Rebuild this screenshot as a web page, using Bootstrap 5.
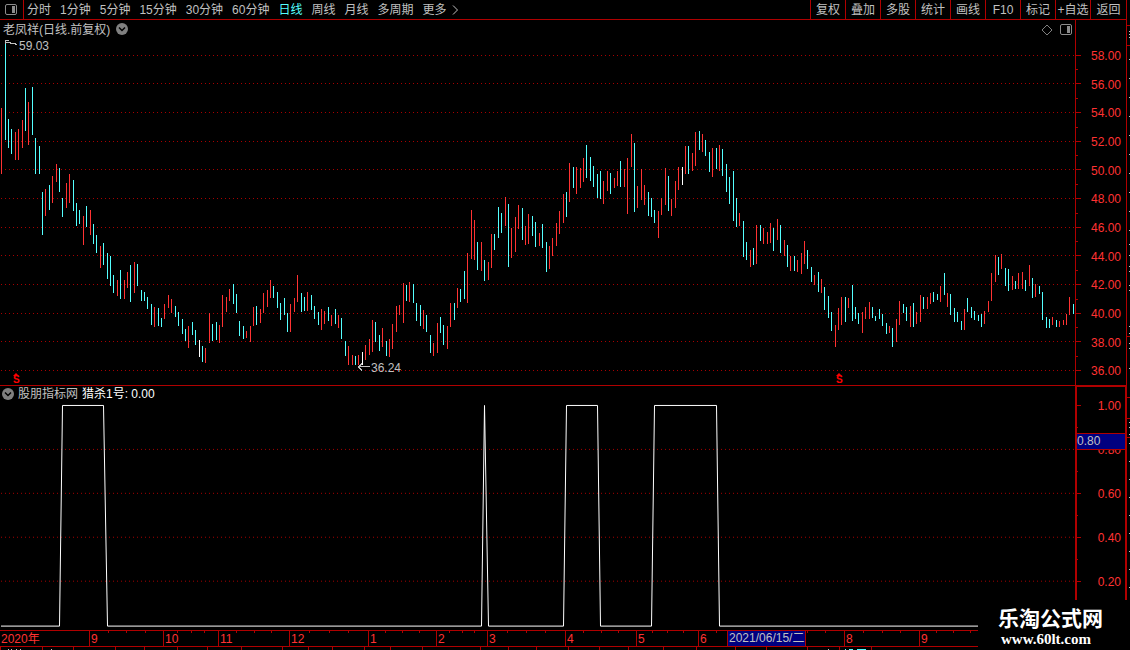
<!DOCTYPE html>
<html lang="zh-CN">
<head>
<meta charset="utf-8">
<meta name="viewport" content="width=device-width, initial-scale=1">
<title>老凤祥 日线</title>
<link href="https://cdn.jsdelivr.net/npm/bootstrap@5.3.0/dist/css/bootstrap.min.css" rel="stylesheet">
<style>
  :root { --line: #b00000; --up: #ff3232; --down: #54ffff; --txt: #c0c0c0; --navy: #000080; }
  body { background: #000; color: var(--txt); font: 12px/12px "Liberation Sans", "Noto Sans CJK SC", sans-serif; }
  .screen { height: 100vh; }
  .toolbar { height: 20px; border-bottom: 1px solid var(--line); }
  .tool { background: none; border: 0; padding: 0; color: inherit; line-height: 18px; white-space: nowrap; }
  .tool.current { color: var(--down); }
  .layout-btn { width: 24px; border-right: 1px solid var(--line); }
  .periods { gap: 9px; padding-left: 3px; }
  .actions .tool { width: 35px; border-left: 1px solid var(--line); }
  .actions .tool:last-child { width: 36px; }
  .price-panel { flex: 366 1 0; min-height: 0; border-bottom: 1px solid var(--line); }
  .signal-panel { flex: 244 1 0; min-height: 0; }
  .plot { min-width: 0; }
  .plot-title { top: 3px; left: 3px; height: 14px; }
  .signal-panel .plot-title { top: 1px; left: 2px; }
  .plot-tools { top: 3px; right: 2px; gap: 6px; }
  .scale { width: 51px; border-left: 1px solid var(--line); color: var(--up); }
  .scale-labels { padding: 30px 5px 8px 0; }
  .signal-panel .scale { border: solid var(--line); border-width: 1px 1px 0 2px; }
  .signal-panel .scale-labels { padding: 13px 4px 42px 0; }
  .ticks { width: 6px; }
  .cursor-value { top: 46px; height: 17px; line-height: 15px; background: var(--navy); color: var(--txt); border: solid var(--line); border-width: 1px 0; }
  .time-axis { height: 17px; margin-right: 148px; border: solid var(--line); border-width: 1px 0; color: var(--up); line-height: 16px; }
  .month { flex: none; padding-left: 1px; border-left: 1px solid var(--line); white-space: nowrap; }
  .month:first-child { border-left: 0; }
  .cursor-date { background: var(--navy); color: var(--txt); border: solid var(--line); border-width: 0 1px; padding-left: 1px; line-height: 14px; height: 15px; width: 79px; white-space: nowrap; }
  .status { height: 3px; }
  .edge { width: 4px; border-left: 1px solid var(--line); }
  .note { line-height: 12px; }
  .event { color: #f00; font: bold 10px/8px "Liberation Sans", sans-serif; }
  .site-sign { width: 152px; height: 50px; padding: 6px 0 0 20px; background: #000; color: #fff; }
  .site-name { font: bold 21px/22px "Noto Sans CJK SC", sans-serif; }
  .site-url { font: bold 15px/16px "Liberation Serif", serif; padding: 3px 0 0 3px; }
  svg { display: block; flex: none; }
  .plot > svg, .ticks, .edge svg { shape-rendering: crispEdges; }
</style>
</head>
<body>
<div class="screen d-flex position-relative overflow-hidden">
  <div class="d-flex flex-column flex-grow-1 overflow-hidden">
    <nav class="toolbar d-flex flex-shrink-0" aria-label="周期">
      <button class="tool layout-btn d-flex align-items-center ps-1" aria-label="布局">
        <svg width="14" height="13" viewBox="0 0 14 13"><rect x="1.5" y="1.5" width="11" height="10" rx="1.5" fill="none" stroke="#8c8c8c"/><rect x="8" y="3" width="3" height="7" fill="#8c8c8c"/></svg>
      </button>
      <div class="periods d-flex flex-grow-1">
        <button class="tool">分时</button><button class="tool">1分钟</button><button class="tool">5分钟</button><button class="tool">15分钟</button><button class="tool">30分钟</button><button class="tool">60分钟</button><button class="tool current">日线</button><button class="tool">周线</button><button class="tool">月线</button><button class="tool">多周期</button>
        <button class="tool d-flex align-items-center">更多<svg class="ms-1" width="8" height="10" viewBox="0 0 8 10"><path d="M2 .5 6.500 5 2 9.500" fill="none" stroke="#c0c0c0"/></svg></button>
      </div>
      <div class="actions d-flex">
        <button class="tool">复权</button><button class="tool">叠加</button><button class="tool">多股</button><button class="tool">统计</button><button class="tool">画线</button><button class="tool">F10</button><button class="tool">标记</button><button class="tool">+自选</button><button class="tool">返回</button>
      </div>
    </nav>

    <section class="price-panel d-flex">
      <div class="plot flex-grow-1 position-relative" id="pricePlot">
        <svg id="priceChart" class="w-100 h-100" viewBox="0 20 1075 365" preserveAspectRatio="none" role="img" aria-label="日线"></svg>
        <div class="plot-title position-absolute d-flex align-items-center gap-1">
          <span>老凤祥(日线.前复权)</span>
          <svg width="14" height="14" viewBox="0 0 14 14"><circle cx="8" cy="6" r="6" fill="#808080"/><path d="m5 4.500 3 3 3-3" fill="none" stroke="#000" stroke-width="1.500"/></svg>
        </div>
        <div class="plot-tools position-absolute d-flex align-items-center">
          <svg width="12" height="12" viewBox="0 0 12 12"><path d="M6 1 11 6 6 11 1 6Z" fill="none" stroke="#808080"/></svg>
          <svg width="14" height="13" viewBox="0 0 14 13"><rect x="1.500" y="1.500" width="11" height="10" rx="1.500" fill="none" stroke="#8c8c8c"/><rect x="8" y="3" width="3" height="7" fill="#8c8c8c"/></svg>
        </div>
      </div>
      <div class="scale position-relative flex-shrink-0">
        <svg id="priceTicks" class="ticks h-100 position-absolute start-0 top-0" viewBox="0 20 6 365" preserveAspectRatio="none"></svg>
        <div class="scale-labels h-100 d-flex flex-column justify-content-between text-end">
          <span>58.00</span><span>56.00</span><span>54.00</span><span>52.00</span><span>50.00</span><span>48.00</span><span>46.00</span><span>44.00</span><span>42.00</span><span>40.00</span><span>38.00</span><span>36.00</span>
        </div>
      </div>
    </section>

    <section class="signal-panel d-flex">
      <div class="plot flex-grow-1 position-relative">
        <svg id="signalChart" class="w-100 h-100" viewBox="0 386 1075 244" preserveAspectRatio="none" role="img" aria-label="猎杀1号"></svg>
        <div class="plot-title position-absolute d-flex align-items-center gap-1">
          <svg width="12" height="14" viewBox="0 0 12 14"><circle cx="6" cy="7" r="6" fill="#808080"/><path d="m3 5.500 3 3 3-3" fill="none" stroke="#000" stroke-width="1.500"/></svg>
          <span>股朋指标网</span>
          <span class="text-white">猎杀1号: 0.00</span>
        </div>
      </div>
      <div class="scale position-relative flex-shrink-0">
        <svg id="signalTicks" class="ticks h-100 position-absolute start-0 top-0" viewBox="0 387 6 243" preserveAspectRatio="none"></svg>
        <div class="scale-labels h-100 d-flex flex-column justify-content-between text-end">
          <span>1.00</span><span>0.80</span><span>0.60</span><span>0.40</span><span>0.20</span>
        </div>
        <div class="cursor-value position-absolute start-0 end-0">0.80</div>
      </div>
    </section>

    <div class="time-axis plot d-flex flex-shrink-0 position-relative" id="timeAxis"></div>
    <div class="status plot flex-shrink-0"><svg id="statusStrip" class="w-100 h-100" viewBox="0 647 1126 3" preserveAspectRatio="none"></svg></div>
  </div>
  <div class="edge flex-shrink-0"><svg id="edgeMarks" class="w-100 h-100" viewBox="1127 0 3 650" preserveAspectRatio="none"></svg></div>
  <div class="site-sign position-absolute bottom-0 end-0">
    <div class="site-name">乐淘公式网</div>
    <div class="site-url">www.60lt.com</div>
  </div>
</div>

<script src="https://cdn.jsdelivr.net/npm/bootstrap@5.3.0/dist/js/bootstrap.bundle.min.js"></script>
<script>
// x, high, low, kind (r = up, c = down, w = flat)
const bars = `1 108 174 r,5 40 140 c,8 119 148 c,11 129 154 c,15 132 160 r,18 129 160 r,22 120 148 r,25 88 131 c,28 102 145 r,32 87 135 c,35 138 174 c,39 146 174 c,42 192 235 c,45 189 216 r,49 185 210 c,52 176 203 r,56 164 182 r,59 168 192 c,62 198 217 c,66 183 208 r,69 174 203 r,73 180 211 c,76 203 226 c,79 210 224 c,83 216 245 r,86 206 227 c,90 210 235 r,93 224 244 c,96 235 253 c,100 246 268 r,103 243 265 c,107 253 279 c,110 256 286 c,113 275 293 c,117 280 296 r,120 270 299 c,124 280 299 r,127 272 288 r,130 265 302 c,134 262 293 r,137 264 286 c,141 290 301 c,144 292 301 c,147 297 309 c,151 304 325 c,154 307 327 r,158 308 326 c,161 318 327 c,164 304 319 r,168 295 308 r,171 299 313 r,175 306 317 c,178 312 326 c,182 319 334 c,185 329 341 c,188 326 348 r,192 322 335 c,195 330 345 c,199 340 357 w,202 346 362 c,205 348 363 r,209 313 343 r,212 324 341 c,216 322 340 c,219 325 343 r,222 295 327 r,226 297 312 r,229 289 301 r,233 284 304 c,236 294 313 c,239 321 336 c,243 326 339 c,246 331 338 r,250 326 342 r,253 307 326 r,256 306 325 c,260 309 323 r,263 293 313 r,267 290 307 r,270 280 298 r,273 286 298 c,277 292 308 c,280 303 320 c,284 298 315 c,287 313 332 c,290 304 332 r,294 298 312 r,297 275 302 r,301 293 312 c,304 297 311 c,307 292 311 r,311 295 310 c,314 306 319 c,318 312 325 c,321 309 330 r,324 311 324 r,328 307 321 c,331 315 326 r,335 309 324 c,338 315 328 r,341 318 339 c,345 341 356 c,348 346 365 r,352 355 365 r,355 356 365 c,358 355 365 r,362 352 365 w,365 345 360 r,369 339 355 r,372 320 352 r,375 322 342 c,379 335 351 c,382 328 347 r,386 341 356 c,389 339 357 r,392 324 349 r,396 306 332 r,399 305 315 r,403 283 323 r,406 285 301 c,409 282 302 r,413 284 303 c,416 303 321 c,420 305 326 c,423 310 329 r,426 315 332 c,430 335 353 c,433 343 356 r,437 323 353 r,440 317 333 c,443 325 345 c,447 326 349 r,450 303 327 r,454 303 320 c,457 288 308 r,460 289 302 c,464 271 299 c,467 253 303 r,471 210 259 r,474 220 260 r,477 242 270 c,481 242 271 r,484 260 281 c,488 262 280 r,491 234 268 r,494 234 250 c,498 207 238 c,501 213 233 c,505 197 226 r,508 204 267 c,511 228 258 r,515 217 252 r,518 205 229 r,522 208 240 c,525 226 245 r,528 214 244 r,532 216 236 c,535 222 247 c,539 233 246 r,542 224 248 c,546 242 272 c,549 246 269 r,552 238 256 r,556 223 246 r,559 211 234 r,563 194 223 r,566 192 217 c,569 163 202 r,573 167 188 c,576 167 194 r,580 168 188 r,583 158 182 r,586 145 178 c,590 157 181 c,593 166 187 c,597 174 198 c,600 171 199 c,603 181 204 r,607 171 191 r,610 173 194 c,614 178 188 r,617 171 186 r,620 161 187 c,624 169 187 r,627 158 214 r,631 134 167 r,634 143 212 c,637 186 208 r,641 169 200 r,644 185 205 r,648 192 216 c,651 198 217 c,654 210 223 c,658 211 238 r,661 198 215 r,665 168 205 r,668 176 211 c,671 199 216 r,675 181 208 r,678 167 190 r,682 167 185 w,685 146 174 r,688 146 174 c,692 153 171 r,695 132 166 r,699 131 150 c,702 134 152 r,705 140 156 c,709 152 172 c,712 148 177 r,716 148 169 c,719 145 171 r,722 149 176 c,726 164 192 c,729 177 204 c,733 171 221 c,736 198 227 c,739 213 226 r,743 221 257 c,746 242 260 c,750 250 267 r,753 248 265 c,756 225 264 r,760 225 241 c,763 228 244 r,767 232 244 r,770 223 243 r,773 228 251 c,777 219 240 r,780 225 253 c,784 240 256 r,787 245 267 c,790 256 271 r,794 256 271 c,797 260 272 r,801 253 274 r,804 241 264 r,807 250 269 c,811 267 282 c,814 275 285 r,818 272 292 c,821 279 293 r,824 287 310 c,828 296 318 c,831 312 331 c,835 325 347 r,838 308 330 r,841 297 325 r,845 297 322 c,848 298 308 r,852 285 321 c,855 307 319 c,858 313 324 c,862 312 333 r,865 307 319 r,869 302 319 r,872 307 318 c,875 316 321 c,879 309 319 c,882 314 326 c,886 323 334 c,889 326 333 r,892 328 347 c,896 319 342 r,899 301 325 r,903 304 313 c,906 307 321 c,910 306 327 r,913 303 327 c,916 312 324 r,920 295 322 r,923 297 309 c,927 297 309 r,930 293 304 r,933 292 302 c,937 294 300 c,940 286 302 r,944 273 295 c,947 293 307 r,950 294 315 c,954 308 322 c,957 312 322 c,961 321 330 c,964 309 330 r,967 298 312 c,971 307 318 c,974 311 320 c,978 315 321 c,981 314 327 c,984 311 324 r,988 301 312 r,991 273 301 r,995 255 282 r,998 257 275 c,1001 254 269 r,1005 268 286 c,1008 269 291 c,1012 276 290 r,1015 281 289 c,1018 273 289 r,1022 272 289 r,1025 280 291 c,1029 265 286 r,1032 278 298 c,1035 284 297 r,1039 286 294 c,1042 292 320 c,1046 317 328 c,1049 319 328 c,1052 317 325 r,1056 320 327 c,1059 321 327 r,1063 320 325 r,1066 314 325 r,1069 297 315 r,1073 304 314 c`;
const colours = { r: '#ff3232', c: '#54ffff', w: '#ffffff' };
const el = id => document.getElementById(id);
const rect = (x, y, w, h, fill) => `<rect x="${x}" y="${y}" width="${w}" height="${h}" fill="${fill}"/>`;
const grid = ys => ys.map(y => `<path d="M1 ${y + .5}H1075" stroke="#a80000" stroke-dasharray="1 3"/>`).join('');
const half = ys => ys.slice(1).map((y, i) => Math.round((y + ys[i]) / 2));

const priceRows = [55, 83, 112, 141, 169, 198, 227, 255, 284, 313, 341, 370];
el('priceChart').innerHTML = grid(priceRows) + bars.split(',').map(b => {
  const [x, top, low, kind] = b.split(' ');
  return rect(x, top, 1, low - top, colours[kind]);
}).join('') + '<path d="M9 40.500H5.500V44M6 42.500H9L12 43.500H14L17 44.500M370 366.500H358M362 363 358.500 366.500 362 370" fill="none" stroke="#c0c0c0"/>';
el('priceTicks').innerHTML = priceRows.map(y => rect(0, y, 5, 1, '#b00000')).join('') + half(priceRows).map(y => rect(0, y, 2, 1, '#b00000')).join('');

const signalRows = [405, 449, 493, 537, 581];
el('signalChart').innerHTML = grid(signalRows.slice(1)) +
  '<path d="M1 626.500H59.500L62.500 405.500H103.500L107.500 626.500H481.500L484.500 405.500 488.500 626.500H563.500L566.500 405.500H597.500L600.500 626.500H651.500L654.500 405.500H716.500L719.500 626.500H1075" fill="none" stroke="#fff"/>';
el('signalTicks').innerHTML = signalRows.map(y => rect(0, y, 4, 1, '#b00000')).join('') + half(signalRows).map(y => rect(0, y, 1, 1, '#b00000')).join('');

// Labels pinned to points of the price plot
const pin = (x, y, html) => `<span class="note position-absolute" style="left:${x / 10.75}%;top:${(y - 20) / 3.65}%">${html}</span>`;
const mark = '<span class="event d-flex flex-column align-items-center"><svg width="6" height="3" viewBox="0 0 6 3"><path d="M3 0 6 3H0Z" fill="#f00"/></svg>S</span>';
el('pricePlot').insertAdjacentHTML('beforeend', pin(19, 40, '59.03') + pin(371, 362, '36.24') + pin(13, 373, mark) + pin(836, 373, mark));

// Month cells share the axis in proportion to their trading days
const months = [['2020年', 89], ['9', 74], ['10', 55], ['11', 71], ['12', 79], ['1', 68], ['2', 51], ['3', 78], ['4', 71], ['5', 62], ['6', 146], ['8', 75], ['9', 59]];
const weeks = [108,126,145,177,191,204,236,254,271,309,329,348,385,402,419,449,462,474,507,526,545,583,601,618,652,667,683,716,807,825,863,882,900,936,953,970];
el('timeAxis').innerHTML = months.map(([m, w]) => `<div class="month" style="width:${w / 9.78}%">${m}</div>`).join('') +
  `<svg class="position-absolute start-0 top-0 w-100" height="2" viewBox="0 0 978 2" preserveAspectRatio="none">${weeks.map(x => rect(x, 0, 1, 2, '#b00000')).join('')}</svg>` +
  `<div class="cursor-date position-absolute top-0" style="left:${727 / 9.78}%">2021/06/15/二</div>`;

el('statusStrip').innerHTML = [0,42,73,115,144,177,207,241,282,308,332,364,390,422,480,508,536,568,599,628,663,696,735,766,807,839,871].map(x => rect(x, 647, 1, 3, '#b00000')).join('') +
  [8,11,16,20,51,828].map(x => rect(x, 649, 1, 1, '#c0c0c0')).join('') + rect(845, 649, 1, 1, '#54ffff') + rect(849, 649, 4, 1, '#54ffff') + rect(857, 649, 9, 1, '#54ffff');
el('edgeMarks').innerHTML = [25,45,336,397,418,437].map(y => rect(1127, y, 3, 1, '#b00000')).join('') +
  [31,34,37,59,78,97,116,135,154,173,192,211,230,244,255,266,271,285,290,326,333,343,348,368,422,427,434,443,461,479,497,515,533,551,569,587].map(y => rect(1129, y, 1, 1, '#c0c0c0')).join('');
</script>
</body>
</html>
